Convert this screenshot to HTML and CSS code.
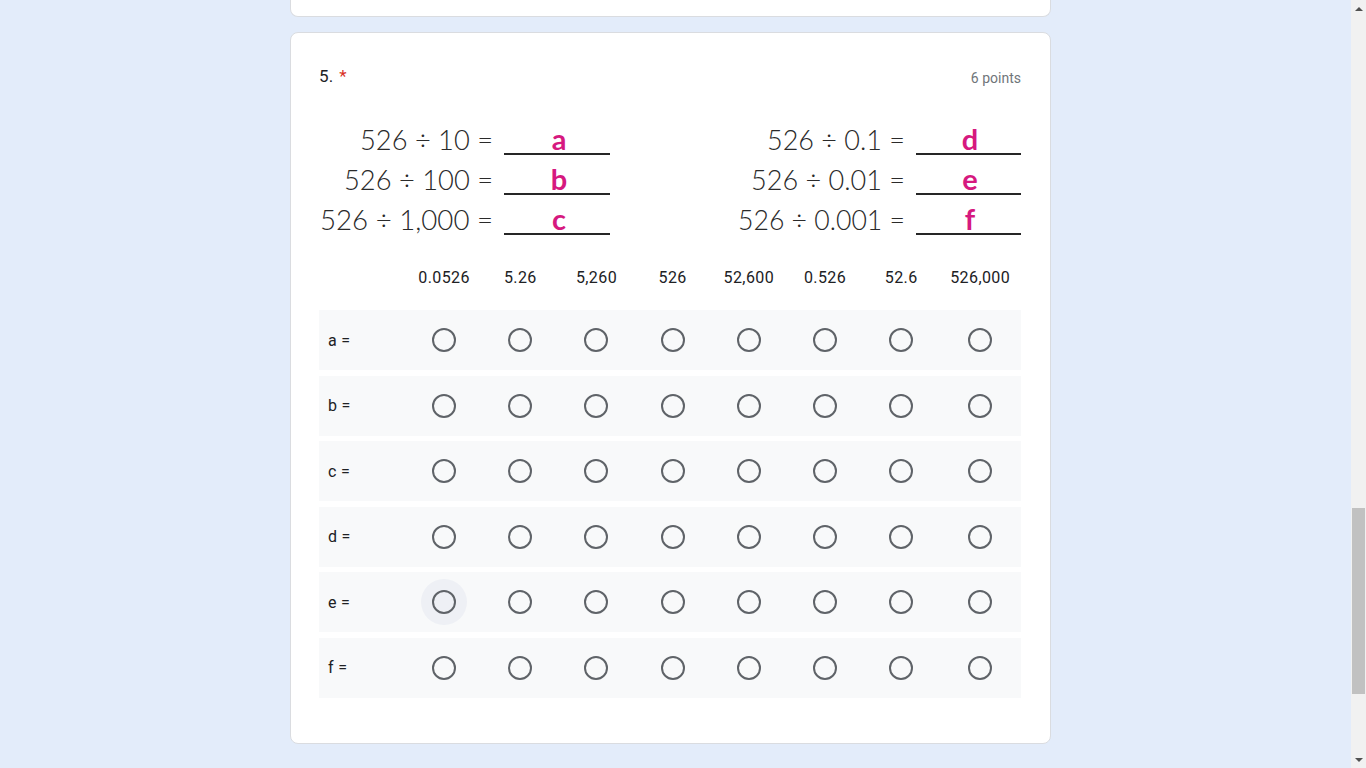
FILE: index.html
```html
<!DOCTYPE html>
<html lang="en">
<head>
<meta charset="utf-8">
<title>Quiz question 5</title>
<link rel="stylesheet" href="styles.css">
</head>
<body>
<main class="page">
  <div class="card card-prev"></div>
  <section class="card question">
    <div class="q-head">
      <div class="q-title">5. <span class="req">*</span></div>
      <div class="points">6 points</div>
    </div>
    <div class="q-image">
      <svg class="eq" width="702" height="120" viewBox="0 0 702 120" xmlns="http://www.w3.org/2000/svg">
        <g class="eq-text">
          <text x="41" y="30" textLength="133" lengthAdjust="spacingAndGlyphs">526 ÷ 10 =</text>
          <text x="25" y="70" textLength="149" lengthAdjust="spacingAndGlyphs">526 ÷ 100 =</text>
          <text x="1" y="110" textLength="173" lengthAdjust="spacingAndGlyphs">526 ÷ 1,000 =</text>
          <text x="448" y="30" textLength="138" lengthAdjust="spacingAndGlyphs">526 ÷ 0.1 =</text>
          <text x="432" y="70" textLength="154" lengthAdjust="spacingAndGlyphs">526 ÷ 0.01 =</text>
          <text x="419" y="110" textLength="167" lengthAdjust="spacingAndGlyphs">526 ÷ 0.001 =</text>
        </g>
        <g class="eq-line">
          <rect x="185" y="33" width="106" height="2"/>
          <rect x="185" y="73" width="106" height="2"/>
          <rect x="185" y="113" width="106" height="2"/>
          <rect x="597" y="33" width="105" height="2"/>
          <rect x="597" y="73" width="105" height="2"/>
          <rect x="597" y="113" width="105" height="2"/>
        </g>
        <g class="eq-ans">
          <text x="240" y="30">a</text>
          <text x="240" y="70">b</text>
          <text x="240" y="110">c</text>
          <text x="651" y="30">d</text>
          <text x="651" y="70">e</text>
          <text x="651" y="110">f</text>
        </g>
      </svg>
    </div>
    <div class="grid">
      <div class="grid-head">
        <div></div>
        <div class="col">0.0526</div>
        <div class="col">5.26</div>
        <div class="col">5,260</div>
        <div class="col">526</div>
        <div class="col">52,600</div>
        <div class="col">0.526</div>
        <div class="col">52.6</div>
        <div class="col">526,000</div>
      </div>
      <div class="rows">
        <div class="grid-row">
          <div class="row-label">a =</div>
          <div class="cell"><span class="radio"></span></div>
          <div class="cell"><span class="radio"></span></div>
          <div class="cell"><span class="radio"></span></div>
          <div class="cell"><span class="radio"></span></div>
          <div class="cell"><span class="radio"></span></div>
          <div class="cell"><span class="radio"></span></div>
          <div class="cell"><span class="radio"></span></div>
          <div class="cell"><span class="radio"></span></div>
        </div>
        <div class="grid-row">
          <div class="row-label">b =</div>
          <div class="cell"><span class="radio"></span></div>
          <div class="cell"><span class="radio"></span></div>
          <div class="cell"><span class="radio"></span></div>
          <div class="cell"><span class="radio"></span></div>
          <div class="cell"><span class="radio"></span></div>
          <div class="cell"><span class="radio"></span></div>
          <div class="cell"><span class="radio"></span></div>
          <div class="cell"><span class="radio"></span></div>
        </div>
        <div class="grid-row">
          <div class="row-label">c =</div>
          <div class="cell"><span class="radio"></span></div>
          <div class="cell"><span class="radio"></span></div>
          <div class="cell"><span class="radio"></span></div>
          <div class="cell"><span class="radio"></span></div>
          <div class="cell"><span class="radio"></span></div>
          <div class="cell"><span class="radio"></span></div>
          <div class="cell"><span class="radio"></span></div>
          <div class="cell"><span class="radio"></span></div>
        </div>
        <div class="grid-row">
          <div class="row-label">d =</div>
          <div class="cell"><span class="radio"></span></div>
          <div class="cell"><span class="radio"></span></div>
          <div class="cell"><span class="radio"></span></div>
          <div class="cell"><span class="radio"></span></div>
          <div class="cell"><span class="radio"></span></div>
          <div class="cell"><span class="radio"></span></div>
          <div class="cell"><span class="radio"></span></div>
          <div class="cell"><span class="radio"></span></div>
        </div>
        <div class="grid-row">
          <div class="row-label">e =</div>
          <div class="cell"><span class="radio hover"></span></div>
          <div class="cell"><span class="radio"></span></div>
          <div class="cell"><span class="radio"></span></div>
          <div class="cell"><span class="radio"></span></div>
          <div class="cell"><span class="radio"></span></div>
          <div class="cell"><span class="radio"></span></div>
          <div class="cell"><span class="radio"></span></div>
          <div class="cell"><span class="radio"></span></div>
        </div>
        <div class="grid-row">
          <div class="row-label">f =</div>
          <div class="cell"><span class="radio"></span></div>
          <div class="cell"><span class="radio"></span></div>
          <div class="cell"><span class="radio"></span></div>
          <div class="cell"><span class="radio"></span></div>
          <div class="cell"><span class="radio"></span></div>
          <div class="cell"><span class="radio"></span></div>
          <div class="cell"><span class="radio"></span></div>
          <div class="cell"><span class="radio"></span></div>
        </div>
      </div>
    </div>
  </section>
</main>
<div class="scrollbar">
  <div class="sb-arrow sb-up"></div>
  <div class="sb-track"><div class="sb-thumb"></div></div>
  <div class="sb-arrow sb-down"></div>
</div>
</body>
</html>
```
FILE: styles.css
```css
html, body {
  margin: 0;
  padding: 0;
  height: 100%;
  overflow: hidden;
}
body {
  background: #e3ecfa;
  font-family: Roboto, "Liberation Sans", Arial, sans-serif;
  color: #202124;
}
.page {
  width: 761px;
  margin-left: 290px;
  display: flex;
  flex-direction: column;
  gap: 15px;
}
.card {
  box-sizing: border-box;
  background: #fff;
  border: 1px solid #dadce0;
  border-radius: 8px;
}
.card-prev {
  height: 17px;
  border-top: none;
  border-radius: 0 0 8px 8px;
}
.question {
  height: 712px;
  padding: 31px 29px 45px 28px;
}
.q-head {
  display: flex;
  justify-content: space-between;
  align-items: flex-start;
  height: 24px;
}
.q-title {
  font-size: 17px;
  line-height: 24px;
  letter-spacing: 0.3px;
  color: #202124;
}
.req {
  color: #d93025;
  margin-left: 1px;
}
.points {
  margin-top: 2px;
  font-size: 14px;
  line-height: 24px;
  color: #70757a;
}
.q-image {
  margin-top: 32px;
  height: 120px;
}
.eq {
  display: block;
}
.eq-text text {
  font-family: Lato, "Open Sans", sans-serif;
  font-size: 28px;
  font-weight: 300;
  fill: #2a2a2a;
}
.eq-line rect {
  fill: #262626;
}
.eq-ans text {
  font-family: Lato, "Open Sans", sans-serif;
  font-size: 29px;
  font-weight: 700;
  fill: #d6197f;
  text-anchor: middle;
}
.grid {
  margin-top: 26px;
}
.grid-head,
.grid-row {
  display: grid;
  grid-template-columns: 87px repeat(7, 76.2px) 1fr;
  align-items: center;
}
.grid-head {
  height: 24px;
}
.col {
  text-align: center;
  font-size: 16px;
  line-height: 24px;
  letter-spacing: 0.4px;
  color: #202124;
}
.rows {
  margin-top: 20px;
  display: flex;
  flex-direction: column;
  gap: 5.6px;
}
.grid-row {
  height: 60px;
  background: #f8f9fa;
}
.row-label {
  padding-left: 9px;
  font-size: 16px;
  letter-spacing: 0.3px;
  color: #202124;
}
.cell {
  display: flex;
  justify-content: center;
  align-items: center;
  height: 60px;
}
.radio {
  box-sizing: border-box;
  width: 24px;
  height: 24px;
  border: 2.2px solid #5f6368;
  border-radius: 50%;
}
.radio.hover {
  background: #eef0f5;
  box-shadow: 0 0 0 11px #eef0f5;
}
.scrollbar {
  position: fixed;
  top: 0;
  right: 0;
  width: 15px;
  height: 768px;
  background: #f1f1f1;
  display: flex;
  flex-direction: column;
}
.sb-arrow {
  height: 17px;
  display: flex;
  justify-content: center;
  align-items: center;
}
.sb-up::after,
.sb-down::after {
  content: "";
  width: 0;
  height: 0;
  border-left: 4px solid transparent;
  border-right: 4px solid transparent;
}
.sb-up::after {
  border-bottom: 4px solid #505050;
}
.sb-down::after {
  border-top: 4px solid #505050;
}
.sb-track {
  flex: 1;
  padding-top: 491px;
}
.sb-thumb {
  width: 13px;
  margin-left: 1px;
  height: 186px;
  background: #c1c1c1;
}
```
